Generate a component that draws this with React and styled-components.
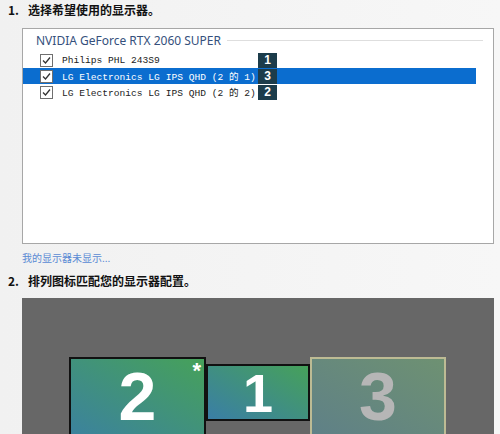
import React from "react";
import styled, { createGlobalStyle } from "styled-components";

const Global = createGlobalStyle`
  html, body {
    margin: 0;
    padding: 0;
    overflow: hidden;
  }
  body {
    background: linear-gradient(to right, #f1f1f1, #f7f7f7);
    font-family: "Noto Sans CJK SC", "Noto Sans", sans-serif;
  }
`;

const Page = styled.div`
  width: 500px;
  height: 434px;
  overflow: hidden;
`;

const Heading = styled.h2`
  display: flex;
  margin: 0;
  padding-left: 8px;
  height: 16px;
  line-height: 16px;
  font-size: 12px;
  font-weight: bold;
  color: #111;
  margin-top: ${(p) => p.top || 0}px;
  span:first-child {
    width: 20px;
  }
`;

const Box = styled.div`
  margin: 10px 0 0 22px;
  width: 470px;
  height: 214px;
  background: #fff;
  border: 1px solid #a7a7a7;
`;

const GroupLabel = styled.div`
  display: flex;
  align-items: center;
  gap: 6px;
  margin: 3px 10px 0 13px;
  height: 16px;
  font-family: "Noto Sans", sans-serif;
  font-size: 12px;
  color: #35507c;
  &::after {
    content: "";
    flex: 1;
    height: 1px;
    background: #dedede;
  }
`;

const List = styled.div`
  margin-top: 4px;
  width: 453px;
`;

const Row = styled.div`
  display: flex;
  align-items: center;
  height: 16px;
  background: ${(p) => (p.selected ? "#0b6dcf" : "transparent")};
  color: ${(p) => (p.selected ? "#fff" : "#222")};
`;

const Check = styled.span`
  box-sizing: border-box;
  display: flex;
  align-items: center;
  justify-content: center;
  margin-left: 17px;
  width: 13px;
  height: 13px;
  background: #fff;
  border: 1px solid #6f6f6f;
`;

const Name = styled.span`
  width: 196px;
  margin-left: 9px;
  font-family: "Liberation Mono", "Noto Sans CJK SC", monospace;
  font-size: 9.6px;
  white-space: pre;
  overflow: hidden;
`;

const Badge = styled.span`
  display: flex;
  align-items: center;
  justify-content: center;
  width: 19px;
  height: 15px;
  background: #1c3c4b;
  color: #fff;
  font-family: "Liberation Sans", sans-serif;
  font-weight: bold;
  font-size: 12px;
`;

const Missing = styled.div`
  margin: 7px 0 0 22px;
  height: 14px;
  line-height: 14px;
  font-size: 10px;
  color: #5a8ad4;
`;

const Panel = styled.div`
  margin: 9px 0 0 22px;
  width: 472px;
  height: 140px;
  background: #676767;
  display: flex;
  align-items: flex-start;
  padding: 59px 0 0 47px;
  box-sizing: border-box;
`;

const Monitor = styled.div`
  position: relative;
  box-sizing: border-box;
  display: flex;
  justify-content: center;
  width: ${(p) => p.w}px;
  height: ${(p) => p.h}px;
  margin-top: ${(p) => p.top || 0}px;
  border: 2px solid ${(p) => (p.faded ? "#bdbb94" : "#111")};
  background: ${(p) =>
    p.faded
      ? "linear-gradient(30deg, #5d7e8a, #6e9172)"
      : "linear-gradient(30deg, #3a7ea6, #46a15a)"};
  color: ${(p) => (p.faded ? "#b6b6b6" : "#fff")};
  font-family: "Liberation Sans", sans-serif;
  font-weight: bold;
  font-size: ${(p) => p.size}px;
  line-height: 1;
  padding-top: ${(p) => p.pad}px;
`;

const Star = styled.span`
  position: absolute;
  top: 1px;
  right: 3px;
  font-size: 22px;
  color: #fff;
`;

const CheckIcon = () => (
  <svg width="11" height="11" viewBox="0 0 11 11">
    <path d="M2 5.5 L4.5 8 L9 2.5" fill="none" stroke="#333" strokeWidth="1.3" />
  </svg>
);

const monitors = [
  { name: "Philips PHL 243S9", badge: "1" },
  { name: "LG Electronics LG IPS QHD (2 的 1)", badge: "3", selected: true },
  { name: "LG Electronics LG IPS QHD (2 的 2)", badge: "2" },
];

export default function App() {
  return (
    <Page>
      <Global />
      <Heading top={2}>
        <span>1.</span>
        <span>选择希望使用的显示器。</span>
      </Heading>
      <Box>
        <GroupLabel>NVIDIA GeForce RTX 2060 SUPER</GroupLabel>
        <List>
          {monitors.map((m) => (
            <Row key={m.name} selected={m.selected}>
              <Check>
                <CheckIcon />
              </Check>
              <Name>{m.name}</Name>
              <Badge>{m.badge}</Badge>
            </Row>
          ))}
        </List>
      </Box>
      <Missing>我的显示器未显示...</Missing>
      <Heading top={8}>
        <span>2.</span>
        <span>排列图标匹配您的显示器配置。</span>
      </Heading>
      <Panel>
        <Monitor w={137} h={100} size={68} pad={3}>
          2<Star>*</Star>
        </Monitor>
        <Monitor w={104} h={57} top={7} size={54} pad={0}>
          1
        </Monitor>
        <Monitor w={136} h={100} size={68} pad={3} faded>
          3
        </Monitor>
      </Panel>
    </Page>
  );
}
